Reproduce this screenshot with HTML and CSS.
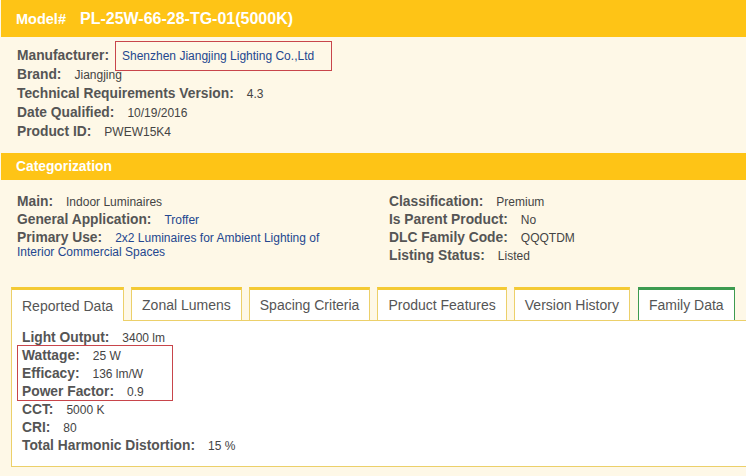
FILE: index.html
```html
<!DOCTYPE html>
<html>
<head>
<meta charset="utf-8">
<link rel="stylesheet" href="styles.css">
</head>
<body>
<div class="page">
  <div class="bar bar-model">
    <span class="model-label">Model#</span>
    <span class="model-value">PL-25W-66-28-TG-01(5000K)</span>
  </div>
  <div class="info">
    <div class="row"><span class="lbl">Manufacturer:</span><span class="val link boxed">Shenzhen Jiangjing Lighting Co.,Ltd</span></div>
    <div class="row"><span class="lbl">Brand:</span><span class="val">Jiangjing</span></div>
    <div class="row"><span class="lbl">Technical Requirements Version:</span><span class="val">4.3</span></div>
    <div class="row"><span class="lbl">Date Qualified:</span><span class="val">10/19/2016</span></div>
    <div class="row"><span class="lbl">Product ID:</span><span class="val">PWEW15K4</span></div>
  </div>
  <div class="bar bar-cat">Categorization</div>
  <div class="cat">
    <div class="col col-left">
      <div class="crow"><span class="lbl">Main:</span><span class="val">Indoor Luminaires</span></div>
      <div class="crow"><span class="lbl">General Application:</span><span class="val link">Troffer</span></div>
      <div class="crow"><span class="lbl">Primary Use:</span><span class="val link">2x2 Luminaires for Ambient Lighting of Interior Commercial Spaces</span></div>
    </div>
    <div class="col col-right">
      <div class="crow"><span class="lbl">Classification:</span><span class="val">Premium</span></div>
      <div class="crow"><span class="lbl">Is Parent Product:</span><span class="val">No</span></div>
      <div class="crow"><span class="lbl">DLC Family Code:</span><span class="val">QQQTDM</span></div>
      <div class="crow"><span class="lbl">Listing Status:</span><span class="val">Listed</span></div>
    </div>
  </div>
  <div class="tabs">
    <div class="tab active">Reported Data</div>
    <div class="tab">Zonal Lumens</div>
    <div class="tab">Spacing Criteria</div>
    <div class="tab">Product Features</div>
    <div class="tab">Version History</div>
    <div class="tab green">Family Data</div>
  </div>
  <div class="panel">
    <div class="prow"><span class="lbl">Light Output:</span><span class="val">3400 lm</span></div>
    <div class="hl">
      <div class="prow"><span class="lbl">Wattage:</span><span class="val">25 W</span></div>
      <div class="prow"><span class="lbl">Efficacy:</span><span class="val">136 lm/W</span></div>
      <div class="prow"><span class="lbl">Power Factor:</span><span class="val">0.9</span></div>
    </div>
    <div class="prow"><span class="lbl">CCT:</span><span class="val">5000 K</span></div>
    <div class="prow"><span class="lbl">CRI:</span><span class="val">80</span></div>
    <div class="prow"><span class="lbl">Total Harmonic Distortion:</span><span class="val">15 %</span></div>
  </div>
</div>
</body>
</html>
```

FILE: styles.css
```css
html, body {
  margin: 0;
  padding: 0;
  background: #fef8e7;
}
body {
  font-family: "Liberation Sans", Arial, sans-serif;
  color: #555;
  width: 746px;
  height: 476px;
  overflow: hidden;
}
.page {
  padding-left: 1px;
}
.bar {
  background: #fec416;
  color: #fff;
  font-weight: bold;
  display: flex;
  align-items: center;
}
.bar-model {
  height: 37px;
  padding-left: 15px;
  gap: 14px;
  align-items: baseline;
  box-sizing: border-box;
  padding-top: 10px;
}
.model-label {
  font-size: 14.5px;
}
.model-value {
  font-size: 16px;
}
.info {
  padding: 8px 0 0 16px;
  height: 107px;
  box-sizing: border-box;
}
.row {
  height: 19px;
  line-height: 19px;
  white-space: nowrap;
}
.lbl {
  font-weight: bold;
  font-size: 13.8px;
  color: #555;
  margin-right: 13px;
}
.val {
  font-size: 12px;
  color: #444;
}
.link {
  color: #24478f;
}
.boxed {
  position: relative;
}
.boxed::after {
  content: "";
  position: absolute;
  left: -7px;
  top: -8px;
  width: 215px;
  height: 28px;
  border: 1px solid #c8454b;
}
.bar-cat {
  height: 27px;
  padding-left: 15px;
  font-size: 13.8px;
  margin-top: 9px;
}
.cat {
  display: flex;
  padding: 13px 0 0 16px;
  height: 107px;
  box-sizing: border-box;
}
.col-left {
  width: 330px;
}
.col-right {
  margin-left: 42px;
}
.crow {
  font-size: 12px;
  line-height: 14px;
  padding: 2px 0 2px;
}
.crow span {
  line-height: 14px;
}
.tabs {
  display: flex;
  gap: 7px;
  margin-left: 10px;
}
.tab {
  height: 33px;
  box-sizing: border-box;
  border: 1px solid #ecd06a;
  border-top: 3px solid #f4ca34;
  border-bottom: none;
  background: #fff;
  color: #555;
  font-size: 14px;
  padding: 0 10px;
  display: flex;
  align-items: center;
}
.tab.active {
  height: 34px;
  margin-bottom: -1px;
  position: relative;
}
.tab.green {
  border-color: #3d9b50;
  border-top-color: #3d9b50;
  margin-left: 1px;
}
.panel {
  margin-left: 10px;
  border: 1px solid #ecd06a;
  border-right: none;
  background: #fff;
  padding: 7px 0 12px 10px;
  height: 147px;
  box-sizing: border-box;
}
.prow {
  line-height: 18px;
  height: 18px;
  white-space: nowrap;
}
.hl {
  width: 156px;
  box-sizing: border-box;
  margin-left: -5px;
  padding-left: 4px;
  border: 1px solid #c8454b;
  margin-top: -1px;
  margin-bottom: -1px;
}
```
